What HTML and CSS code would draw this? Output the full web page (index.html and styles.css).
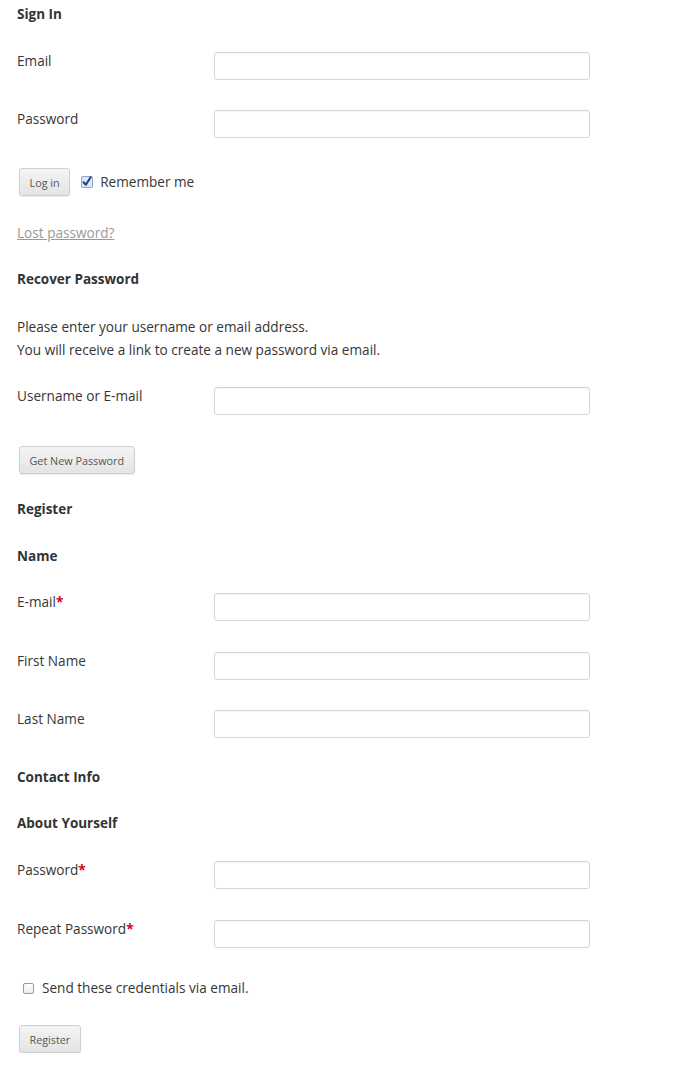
FILE: index.html
```html
<!DOCTYPE html>
<html>
<head>
<meta charset="utf-8">
<link rel="stylesheet" href="styles.css">
</head>
<body>
<div class="page">
  <h3 class="heading first">Sign In</h3>
  <div class="row m27"><label class="label">Email</label><input class="field" type="text"></div>
  <div class="row m29"><label class="label">Password</label><input class="field" type="password"></div>
  <div class="login-row">
    <button class="btn">Log in</button>
    <span class="check">
      <svg width="12" height="12" viewBox="0 0 12 12"><rect x="0.5" y="0.5" width="11" height="11" rx="1.5" fill="#dfe8f4" stroke="#8fa5c4"/><path d="M2.6 6.2 L4.9 8.7 L9.6 1.2" fill="none" stroke="#1f3f86" stroke-width="2" stroke-linecap="round" stroke-linejoin="round"/></svg>
    </span>
    <span class="check-text">Remember me</span>
  </div>
  <a class="lost" href="#">Lost password?</a>
  <h3 class="heading m26">Recover Password</h3>
  <p class="note">Please enter your username or email address.<br>You will receive a link to create a new password via email.</p>
  <div class="row m25"><label class="label">Username or E-mail</label><input class="field" type="text"></div>
  <button class="btn block m31">Get New Password</button>
  <h3 class="heading m25">Register</h3>
  <h3 class="heading m27">Name</h3>
  <div class="row m26"><label class="label">E-mail<span class="req">*</span></label><input class="field" type="text"></div>
  <div class="row m30"><label class="label">First Name</label><input class="field" type="text"></div>
  <div class="row m29"><label class="label">Last Name</label><input class="field" type="text"></div>
  <h3 class="heading m29">Contact Info</h3>
  <h3 class="heading m26">About Yourself</h3>
  <div class="row m27"><label class="label">Password<span class="req">*</span></label><input class="field" type="password"></div>
  <div class="row m30"><label class="label">Repeat Password<span class="req">*</span></label><input class="field" type="password"></div>
  <div class="send-row">
    <span class="box"></span>
    <span class="send-text">Send these credentials via email.</span>
  </div>
  <button class="btn block m28">Register</button>
</div>
</body>
</html>
```
FILE: styles.css
```css
html, body {
  margin: 0;
  padding: 0;
  background: #fff;
}
body {
  font-family: "Open Sans", "DejaVu Sans", sans-serif;
  font-size: 13.6px;
  color: #363636;
}
.page {
  padding: 4px 0 0 17px;
}
.heading {
  margin: 0;
  font-size: 13.5px;
  font-weight: 700;
  line-height: 20px;
  color: #333;
}
.first { margin-top: 0; }
.row {
  display: flex;
  align-items: flex-start;
  height: 29px;
}
.label {
  width: 197px;
  line-height: 20px;
}
.req {
  color: #d0021b;
  font-weight: 700;
}
.field {
  box-sizing: border-box;
  margin: 1px 0 0 0;
  width: 376px;
  height: 28px;
  border: 1px solid #d6d6d6;
  border-radius: 3px;
  background: #fff;
  box-shadow: inset 0 1px 1px rgba(0,0,0,0.04);
  padding: 0 6px;
  font: inherit;
}
.btn {
  box-sizing: border-box;
  height: 28px;
  margin: 0 0 0 2px;
  padding: 0 9.5px;
  font-family: "Open Sans", "DejaVu Sans", sans-serif;
  font-size: 10.8px;
  color: #555;
  background: linear-gradient(#f4f4f4, #e4e4e4);
  border: 1px solid #cfcfcf;
  border-radius: 3px;
  box-shadow: 0 1px 1px rgba(0,0,0,0.08);
}
.block { display: block; }
.login-row {
  display: flex;
  align-items: center;
  margin-top: 30px;
  height: 28px;
}
.check {
  display: flex;
  margin-left: 11px;
}
.check-text {
  margin-left: 7px;
  margin-top: -1px;
}
.lost {
  display: block;
  margin-top: 27px;
  line-height: 20px;
  color: #999;
  text-decoration: underline;
}
.note {
  margin: 26px 0 0 0;
  line-height: 23px;
}
.send-row {
  display: flex;
  align-items: center;
  margin-top: 29px;
  height: 20px;
}
.box {
  box-sizing: border-box;
  width: 11px;
  height: 11px;
  margin-left: 6px;
  border: 1px solid #999;
  border-radius: 2px;
  background: linear-gradient(#fff, #eee);
  margin-top: 2px;
}
.send-text {
  margin-left: 8px;
}
.m25 { margin-top: 25px; }
.m26 { margin-top: 26px; }
.m27 { margin-top: 27px; }
.m28 { margin-top: 28px; }
.m29 { margin-top: 29px; }
.m30 { margin-top: 30px; }
.m31 { margin-top: 31px; }
```
